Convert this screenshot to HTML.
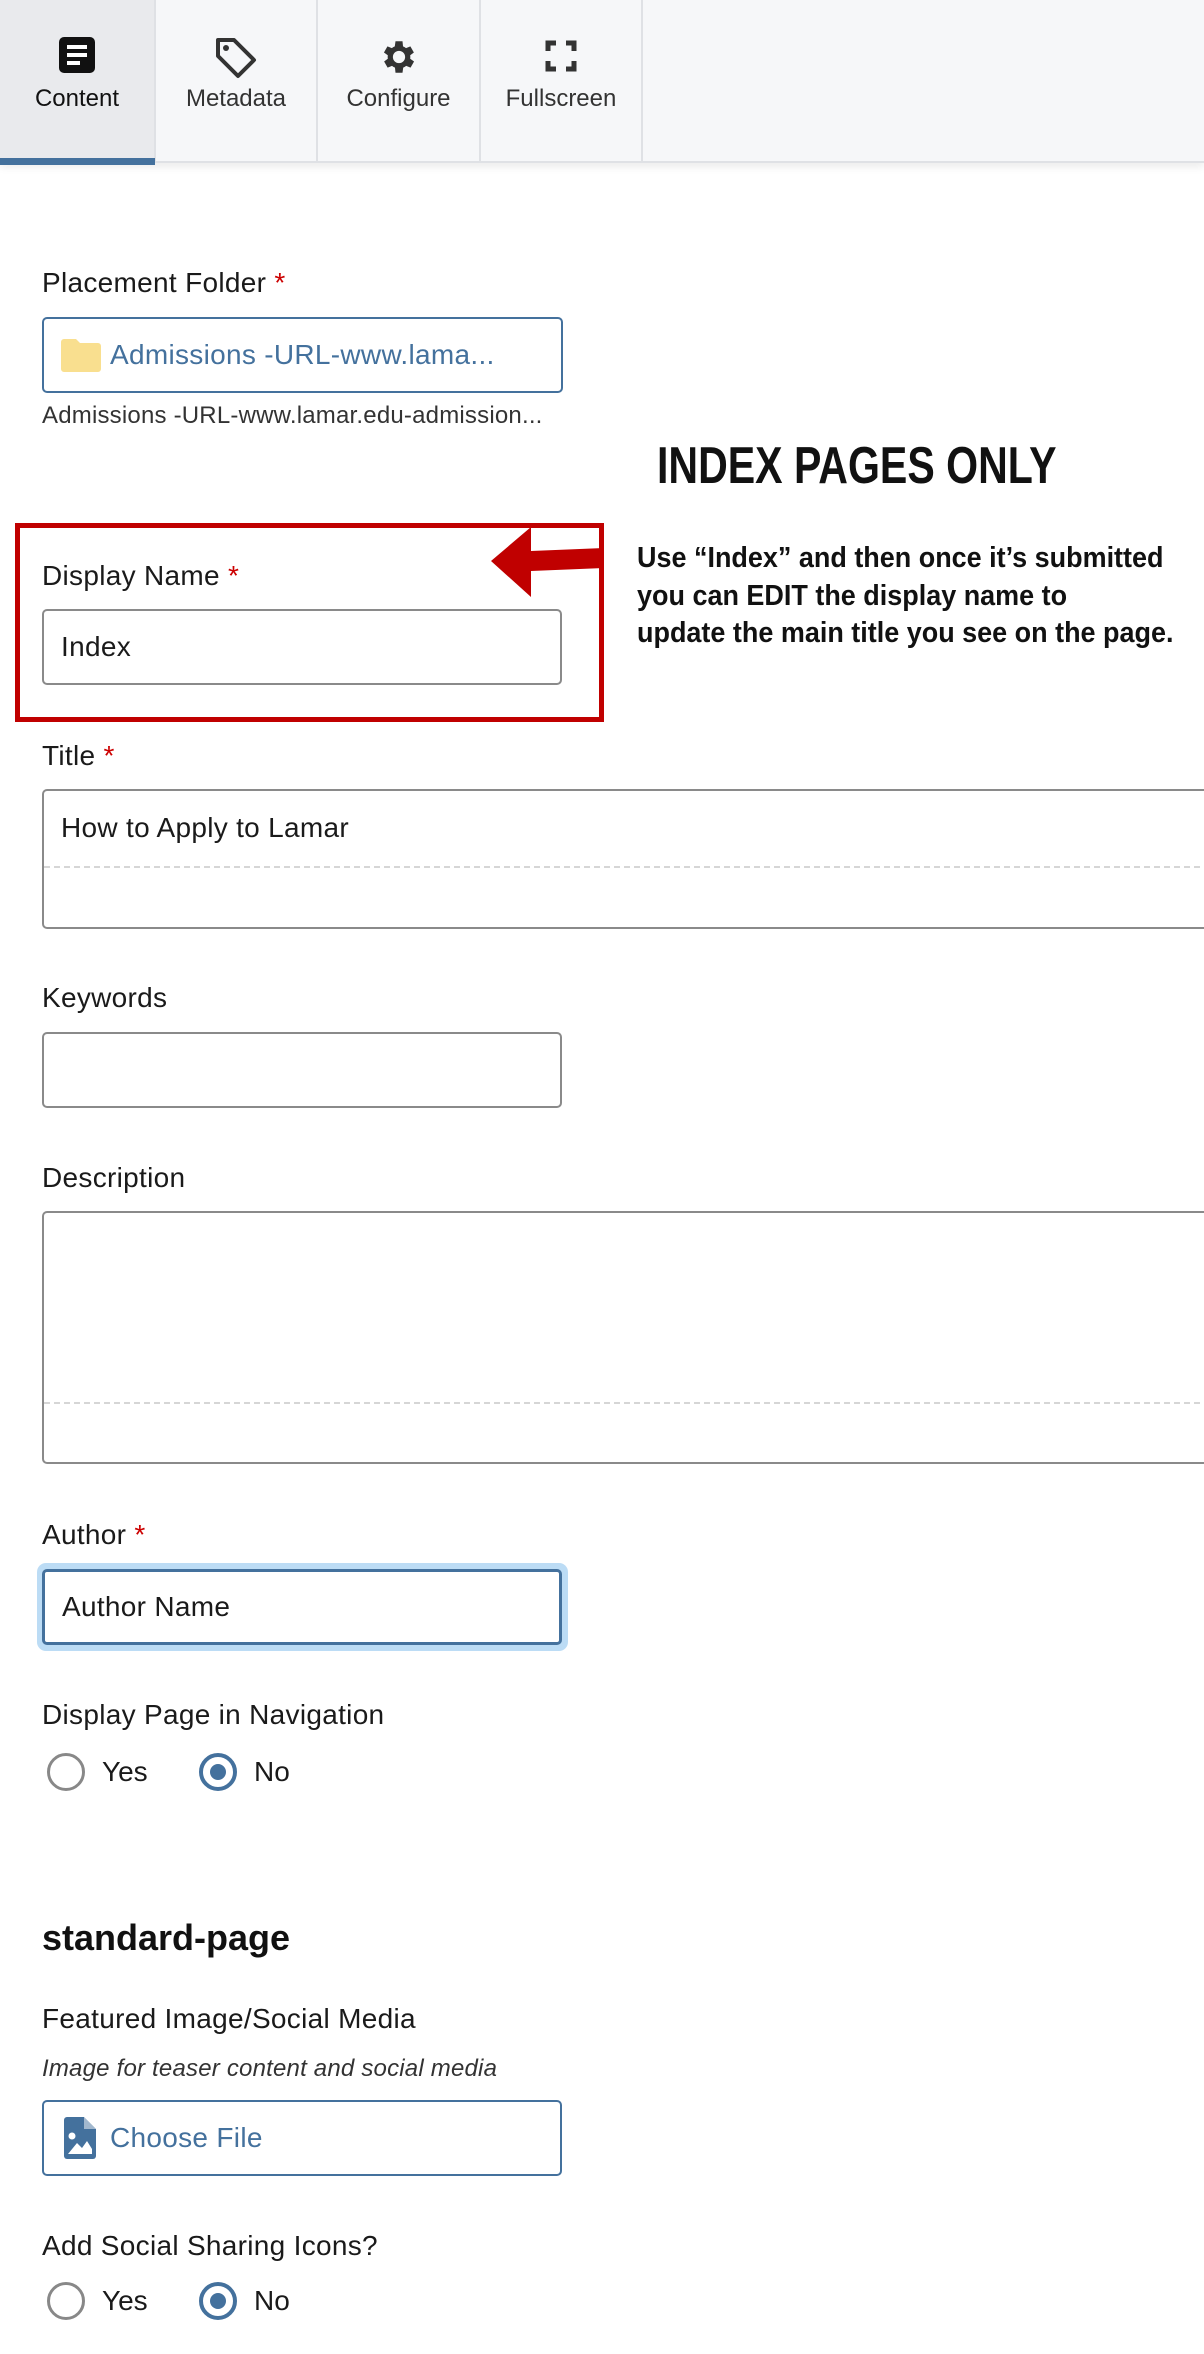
<!DOCTYPE html>
<html><head><meta charset="utf-8"><style>
*{margin:0;padding:0;box-sizing:border-box}
body{width:1204px;height:2354px;background:#fff;font-family:"Liberation Sans",Arial,sans-serif;color:#1a1a1a;position:relative;overflow:hidden}
.a{position:absolute}
.tabs{left:0;top:0;width:1204px;height:163px;background:#f6f7f9;border-bottom:2px solid #dfe1e5;box-shadow:0 4px 8px rgba(0,0,0,.08)}
.tab{position:absolute;top:0;height:163px;border-right:2px solid #dfe1e5;text-align:center;font-size:24px;color:#333}
.tab svg{position:absolute;left:50%;top:36px;transform:translateX(-50%)}
.tab span{position:absolute;left:0;right:0;top:85px}
.lbl{font-size:28px;left:42px;line-height:34px;letter-spacing:.3px}
.req{color:#c00}
.box{left:42px;width:520px;height:76px;border:2px solid #8a8a8a;border-radius:5px;background:#fff;font-size:28px;line-height:72px;padding-left:17px;letter-spacing:.3px}
.wide{width:1180px}
.dash{position:absolute;left:0;right:0;border-top:2px dashed #d6d6d6}
.radio{width:38px;height:38px;border-radius:50%;border:3px solid #888;background:#fff}
.radio.on{border:4px solid #44719d}
.radio.on::after{content:"";position:absolute;left:7px;top:7px;width:16px;height:16px;border-radius:50%;background:#44719d}
.rt{font-size:28px;line-height:34px}
.note{font-family:"Liberation Sans Narrow","Liberation Sans",sans-serif;font-weight:bold;color:#111;white-space:nowrap;transform-origin:0 0}
</style></head><body>
<div class="a tabs">
 <div class="tab" style="left:0;width:156px;background:#e9eaed;color:#111">
  <svg width="38" height="38" viewBox="0 0 38 38"><rect x="1" y="1" width="36" height="36" rx="5" fill="#111"/><rect x="9" y="9" width="20" height="4" fill="#fff"/><rect x="9" y="17" width="20" height="4" fill="#fff"/><rect x="9" y="25" width="13" height="4" fill="#fff"/></svg>
  <span>Content</span>
  <div style="position:absolute;left:0;bottom:-2px;width:155px;height:7px;background:#44719d"></div>
 </div>
 <div class="tab" style="left:156px;width:162px">
  <svg width="44" height="44" viewBox="0 0 44 44"><path d="M4 4 L20 4 L40 24 L24 40 L4 20 Z" fill="none" stroke="#333" stroke-width="4" stroke-linejoin="round"/><circle cx="12" cy="12" r="3" fill="#333"/></svg>
  <span>Metadata</span>
 </div>
 <div class="tab" style="left:318px;width:163px">
  <svg width="42" height="42" viewBox="0 0 24 24"><path fill="#333" d="M19.4 13a7.5 7.5 0 0 0 0-2l2.1-1.6-2-3.5-2.5 1a7 7 0 0 0-1.7-1L15 3h-4l-.4 2.9a7 7 0 0 0-1.7 1l-2.5-1-2 3.5L6.6 11a7.5 7.5 0 0 0 0 2l-2.1 1.6 2 3.5 2.5-1a7 7 0 0 0 1.7 1L11 21h4l.4-2.9a7 7 0 0 0 1.7-1l2.5 1 2-3.5zM13 15.5a3.5 3.5 0 1 1 0-7 3.5 3.5 0 0 1 0 7z" transform="translate(-1 0)"/></svg>
  <span>Configure</span>
 </div>
 <div class="tab" style="left:481px;width:162px">
  <svg width="32" height="32" viewBox="0 0 32 32" style="top:40px"><path d="M3 11V3h8M21 3h8v8M29 21v8h-8M11 29H3v-8" fill="none" stroke="#333" stroke-width="5"/></svg>
  <span>Fullscreen</span>
 </div>
</div>

<div class="a lbl" style="top:266px">Placement Folder <span class="req">*</span></div>
<div class="a box" style="top:317px;width:521px;border-color:#44719d;color:#44719d;padding-left:66px">
 <svg class="a" style="left:17px;top:20px" width="40" height="33" viewBox="0 0 40 33"><path d="M3 0h12l4 4h18a3 3 0 0 1 3 3v23a3 3 0 0 1-3 3H3a3 3 0 0 1-3-3V3a3 3 0 0 1 3-3z" fill="#f9df8f"/></svg>
 Admissions -URL-www.lama...</div>
<div class="a" style="left:42px;top:402px;font-size:24px;color:#333;letter-spacing:.2px">Admissions -URL-www.lamar.edu-admission...</div>

<div class="a note" style="left:657px;top:436px;font-size:52px;transform:scaleX(.79)">INDEX PAGES ONLY</div>
<div class="a note" style="left:637px;top:540px;font-size:29px;line-height:37.5px;transform:scaleX(.93)">Use “Index” and then once it’s submitted<br>you can EDIT the display name to<br>update the main title you see on the page.</div>

<div class="a" style="left:15px;top:523px;width:589px;height:199px;border:5px solid #c00000"></div>
<svg class="a" style="left:480px;top:520px" width="125" height="90" viewBox="0 0 125 90"><polygon points="11,41 51,7 51,31 124,28 124,48 51,51 51,77" fill="#c00000"/></svg>
<div class="a lbl" style="top:559px">Display Name <span class="req">*</span></div>
<div class="a box" style="top:609px">Index</div>

<div class="a lbl" style="top:739px">Title <span class="req">*</span></div>
<div class="a box wide" style="top:789px;height:140px;line-height:74px">How to Apply to Lamar<div class="dash" style="top:75px"></div></div>

<div class="a lbl" style="top:981px">Keywords</div>
<div class="a box" style="top:1032px"></div>

<div class="a lbl" style="top:1161px">Description</div>
<div class="a box wide" style="top:1211px;height:253px"><div class="dash" style="top:189px"></div></div>

<div class="a lbl" style="top:1518px">Author <span class="req">*</span></div>
<div class="a" style="left:37px;top:1563px;width:531px;height:88px;border-radius:9px;background:#bcdcf5"></div>
<div class="a box" style="top:1569px;border:3px solid #44719d;line-height:70px">Author Name</div>

<div class="a lbl" style="top:1698px">Display Page in Navigation</div>
<div class="a radio" style="left:47px;top:1753px"></div><div class="a rt" style="left:102px;top:1755px">Yes</div>
<div class="a radio on" style="left:199px;top:1753px"></div><div class="a rt" style="left:254px;top:1755px">No</div>

<div class="a" style="left:42px;top:1917px;font-size:36px;font-weight:bold;color:#111">standard-page</div>
<div class="a lbl" style="top:2002px">Featured Image/Social Media</div>
<div class="a" style="left:42px;top:2055px;font-size:24px;font-style:italic;color:#333;letter-spacing:.2px">Image for teaser content and social media</div>
<div class="a box" style="top:2100px;border-color:#44719d;color:#44719d;padding-left:66px;line-height:72px">
 <svg class="a" style="left:20px;top:15px" width="32" height="42" viewBox="0 0 32 42"><path d="M3 0h17l12 12v27a3 3 0 0 1-3 3H3a3 3 0 0 1-3-3V3a3 3 0 0 1 3-3z" fill="#44719d"/><path d="M20 0v12h12" fill="#fff" opacity=".5"/><circle cx="8" cy="19" r="3.5" fill="#fff"/><path d="M4 37l9-11 5 5 5-7 5 8v5z" fill="#fff"/></svg>
 Choose File</div>

<div class="a lbl" style="top:2229px">Add Social Sharing Icons?</div>
<div class="a radio" style="left:47px;top:2282px"></div><div class="a rt" style="left:102px;top:2284px">Yes</div>
<div class="a radio on" style="left:199px;top:2282px"></div><div class="a rt" style="left:254px;top:2284px">No</div>
</body></html>
